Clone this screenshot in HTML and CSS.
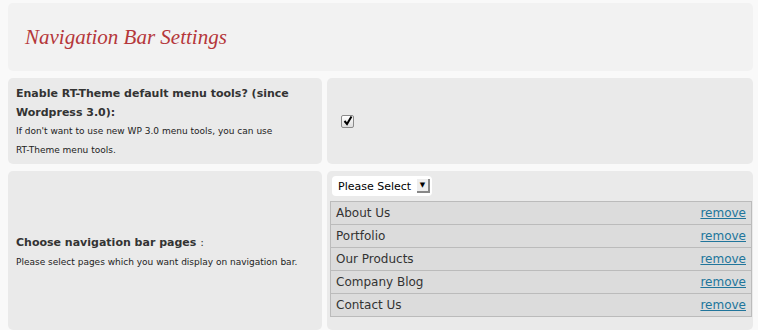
FILE: index.html
```html
<!DOCTYPE html>
<html lang="en">
<head>
    <meta charset="UTF-8">
    <title>Navigation Bar Settings</title>
    <link rel="stylesheet" href="styles.css">
</head>
<body>

    <div class="settings">
        <div class="box title-box">
            <h2>Navigation Bar Settings</h2>
        </div>

        <div class="box label-cell">
            <div class="opt-title">Enable RT-Theme default menu tools? (since Wordpress 3.0):</div>
            <div class="opt-desc">If don't want to use new WP 3.0 menu tools, you can use <span class="nw">RT-Theme</span> menu tools.</div>
        </div>
        <div class="box field-cell center">
            <span class="check">
                <svg width="10" height="10" viewBox="0 0 10 10"><path d="M1.5 5 L4 8 L8.5 0.5" fill="none" stroke="#000" stroke-width="2"/></svg>
            </span>
        </div>

        <div class="box label-cell center">
            <div class="opt-title">Choose navigation bar pages <span class="colon">:</span></div>
            <div class="opt-desc">Please select pages which you want display on navigation bar.</div>
        </div>
        <div class="box field-cell pages-cell">
            <div class="select">
                <span>Please Select</span>
                <span class="arrow">▼</span>
            </div>
            <table class="pages">
                <tr><td>About Us</td><td class="act"><a href="#">remove</a></td></tr>
                <tr><td>Portfolio</td><td class="act"><a href="#">remove</a></td></tr>
                <tr><td>Our Products</td><td class="act"><a href="#">remove</a></td></tr>
                <tr><td>Company Blog</td><td class="act"><a href="#">remove</a></td></tr>
                <tr><td>Contact Us</td><td class="act"><a href="#">remove</a></td></tr>
            </table>
        </div>
    </div>

</body>
</html>
```

FILE: styles.css
```css
body {
    margin: 0;
    background: #f9f9f9;
    font-family: "DejaVu Sans", sans-serif;
    color: #333;
}
.settings {
    display: grid;
    grid-template-columns: 314px 426px;
    gap: 7px 5px;
    padding: 3px 0 0 8px;
}
.box {
    background: #eaeaea;
    border-radius: 5px;
}
.title-box {
    grid-column: 1 / 3;
    background: #f2f2f2;
    height: 68px;
    display: flex;
    align-items: center;
}
.title-box h2 {
    margin: 0 0 0 17px;
    font-family: "Liberation Serif", serif;
    font-style: italic;
    font-weight: normal;
    font-size: 21px;
    color: #b5373a;
}
.label-cell {
    padding: 7px 8px 3px;
    line-height: 18.5px;
}
.center {
    display: flex;
    flex-direction: column;
    justify-content: center;
}
.opt-title {
    font-size: 11px;
    font-weight: bold;
}
.opt-title .colon {
    font-weight: normal;
}
.opt-desc {
    font-size: 9px;
    color: #222;
}
.nw {
    white-space: nowrap;
}
.field-cell {
    height: 86px;
    padding-left: 14px;
}
.check {
    display: flex;
    align-items: center;
    justify-content: center;
    width: 11px;
    height: 11px;
    border: 1px solid #8a8a8a;
    border-radius: 2px;
    background: linear-gradient(#fff, #ddd);
}
.pages-cell {
    height: auto;
    padding: 5px 1px 13px 3px;
}
.select {
    display: flex;
    align-items: center;
    justify-content: space-between;
    width: 92px;
    height: 20px;
    margin-left: 2px;
    padding: 0 2px 0 6px;
    background: #fff;
    border-radius: 4px;
    font-size: 11px;
    color: #000;
}
.arrow {
    width: 11px;
    height: 12px;
    font-size: 7px;
    line-height: 12px;
    text-align: center;
    background: #eee;
    border-right: 2px solid #888;
    border-bottom: 2px solid #888;
}
.pages {
    width: 100%;
    margin-top: 5px;
    border-collapse: collapse;
    font-size: 12px;
    background: #dcdcdc;
}
.pages td {
    border-top: 1px solid #bbb;
    border-bottom: 1px solid #bbb;
    height: 22px;
    padding: 0 5px;
}
.pages td:first-child {
    border-left: 1px solid #bbb;
}
.pages td.act {
    border-right: 1px solid #bbb;
    text-align: right;
}
.pages a {
    color: #21759b;
}
```
